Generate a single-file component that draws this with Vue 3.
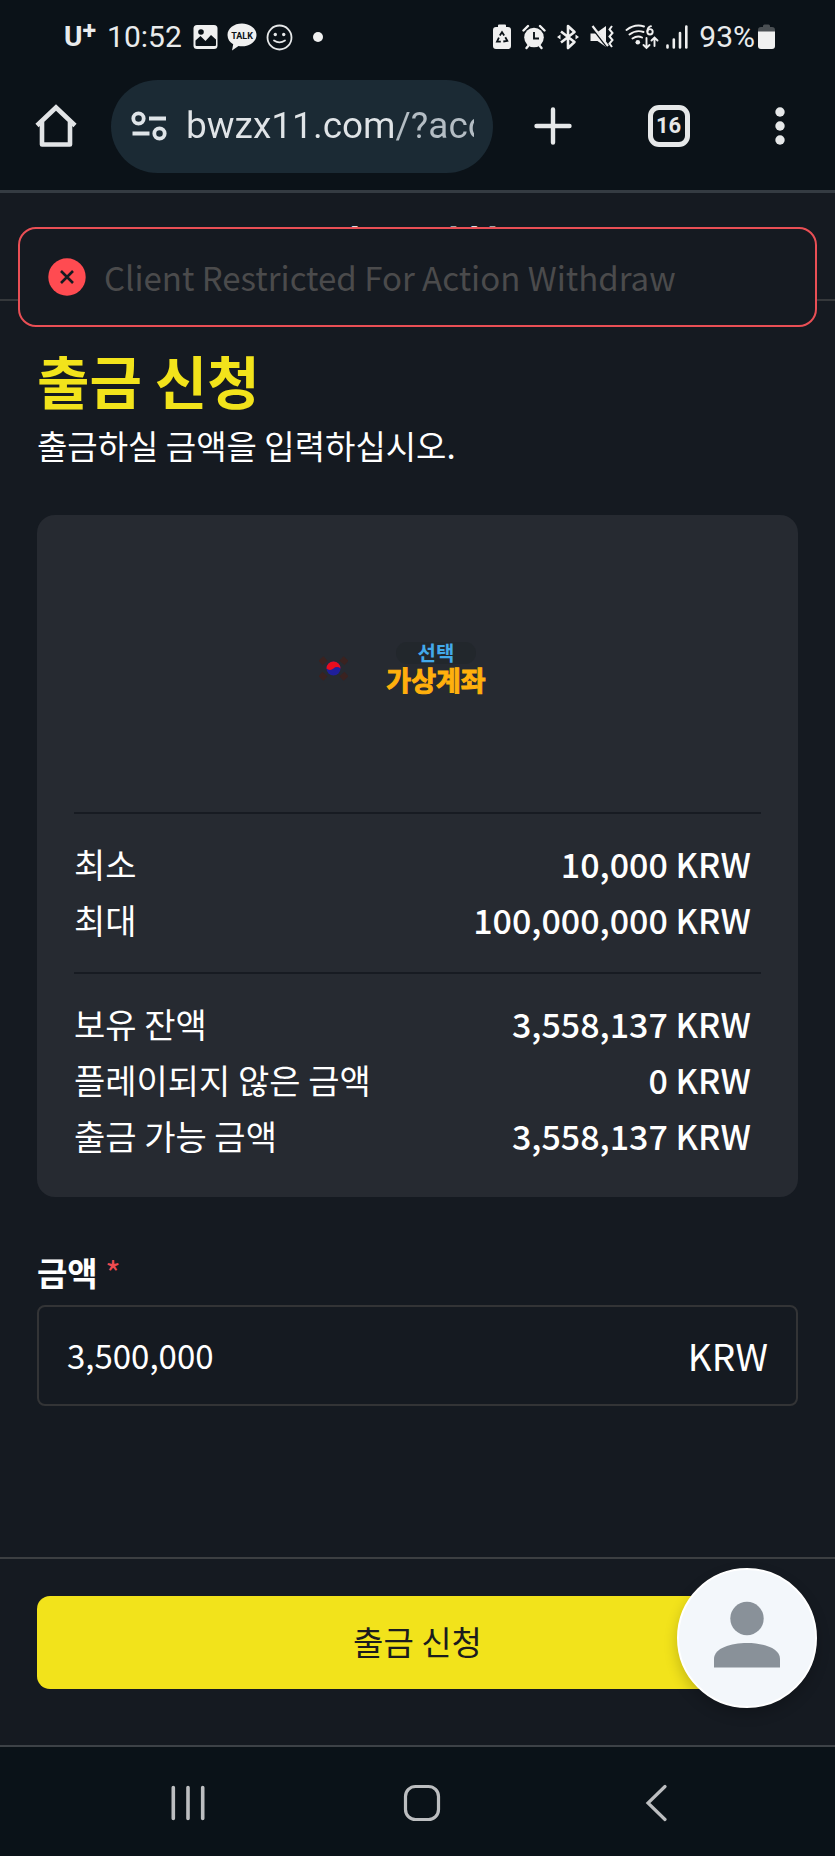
<script setup>
import { ref } from 'vue'

const address = ref('bwzx11.com/?acc')
const amount = ref('3,500,000')

const limits = [
  { label: '최소', value: '10,000 KRW' },
  { label: '최대', value: '100,000,000 KRW' },
]
const balances = [
  { label: '보유 잔액', value: '3,558,137 KRW' },
  { label: '플레이되지 않은 금액', value: '0 KRW' },
  { label: '출금 가능 금액', value: '3,558,137 KRW' },
]
</script>

<template>
  <div class="screen">
    <div class="status">
      <div class="status-group">
        <span class="carrier">U<sup>+</sup></span>
        <span class="clock">10:52</span>
        <svg class="s-image" width="25" height="26" viewBox="0 0 25 26" aria-hidden="true">
          <rect x="0.5" y="1" width="24" height="24" rx="3.5" fill="#f0f0f0" />
          <circle cx="8" cy="8" r="2.8" fill="#0b1218" />
          <path d="M2.5 20v-3.500l5-4.500 5 5 5.500-6 5 4.500V21a1 1 0 0 1-1 1H3.500a1 1 0 0 1-1-1z" fill="#0b1218" />
        </svg>
        <svg class="s-talk" width="30" height="28" viewBox="0 0 30 28" aria-hidden="true">
          <path d="M15 .5C6.900.500.500 5.400.500 12c0 4 2.200 7.400 5.700 9.300L5 27.500l6.500-4.500c1.100.200 2.300.300 3.500.300 8 0 14.500-4.900 14.500-11.300S23 .5 15 .5z" fill="#f0f0f0" />
          <text x="15" y="15.500" text-anchor="middle" class="talk-text">TALK</text>
        </svg>
        <svg class="s-smile" width="27" height="27" viewBox="0 0 27 27" fill="none" stroke="#e6e8e9" stroke-width="1.800" aria-hidden="true">
          <circle cx="13.500" cy="13.500" r="12" />
          <path d="M8 16.500q5.500 3.600 11 0" stroke-linecap="round" />
          <circle cx="9.300" cy="10.500" r="1.700" fill="#e6e8e9" stroke="none" />
          <circle cx="17.700" cy="10.500" r="1.700" fill="#e6e8e9" stroke="none" />
        </svg>
        <span class="dot"></span>
      </div>
      <div class="status-group">
        <svg width="18" height="26" viewBox="0 0 18 26" aria-hidden="true">
          <path d="M5 3V1.500Q5 .5 6 .5h6q1 0 1 1V3h2q3 0 3 3v16q0 3-3 3H3q-3 0-3-3V6q0-3 3-3z" fill="#f0f0f0" />
          <path d="M6.800 11.500 9 8.200l2.200 3.300M12.300 13.300l2 3.600-4 .6M7.800 17.600H4l1.900-4" fill="none" stroke="#0b1218" stroke-width="1.800" />
        </svg>
        <svg width="24" height="26" viewBox="0 0 24 26" aria-hidden="true">
          <circle cx="12" cy="13.500" r="9.800" fill="#f0f0f0" />
          <path d="M1.500 6.500 6 2M22.500 6.500 18 2M4.500 24l2.500-3M19.500 24 17 21" stroke="#f0f0f0" stroke-width="2.400" stroke-linecap="round" />
          <path d="M12 8v6.500h5" fill="none" stroke="#0b1218" stroke-width="1.900" />
        </svg>
        <svg width="22" height="26" viewBox="0 0 22 26" fill="none" stroke="#f0f0f0" stroke-width="2.600" stroke-linejoin="round" aria-hidden="true">
          <path d="M4 7.500l13.500 10.500-6.500 6V2l6.500 6L4 18.500" />
          <path d="M0 13l3.500-2.500v5zM22 13l-3.500-2.500v5z" fill="#f0f0f0" stroke="none" />
        </svg>
        <svg width="24" height="26" viewBox="0 0 24 26" aria-hidden="true">
          <path d="M.5 9.500h5L16 2v21L7.500 17h-7z" fill="#f0f0f0" />
          <path d="M1 1.500 18.500 24" stroke="#0b1218" stroke-width="3" />
          <path d="M2.500 2 18 22" stroke="#f0f0f0" stroke-width="2.200" />
          <path d="M22 2l-2.500 3.500 3 3.500-3 3.500 3 3.500-3 3.500 2.500 3.500" fill="none" stroke="#f0f0f0" stroke-width="2" />
        </svg>
        <svg class="s-wifi" width="34" height="26" viewBox="0 0 34 26" fill="none" stroke="#f0f0f0" stroke-width="1.900" stroke-linecap="round" aria-hidden="true">
          <path d="M1.500 6Q10 -.5 19 2.500M4.500 10.500Q11 5.500 18.500 8M7.500 14.500q5-3.500 9.500-1" />
          <circle cx="12.800" cy="18.300" r="2.300" fill="#f0f0f0" stroke="none" />
          <path d="M26 2.200q-3.500 1-3.500 5" />
          <circle cx="25" cy="7.800" r="2.700" />
          <path d="M21.500 14v9.500M18.500 21l3 3 3-3M29.500 22v-8M26.500 16.500l3-3 3 3" />
        </svg>
        <svg class="s-signal" width="22" height="26" viewBox="0 0 22 26" stroke="#f0f0f0" stroke-width="2.600" stroke-linecap="round" aria-hidden="true">
          <path d="M1.500 21.500v2M7.800 15.500v8M14 9v14.500" />
          <path d="M20.300 2.500v21" />
        </svg>
        <span class="percent">93%</span>
        <svg class="s-battery" width="17" height="26" viewBox="0 0 17 26" aria-hidden="true">
          <path d="M5 3V2q0-1.500 1.500-1.500h4Q12 .5 12 2v1h2q3 0 3 3v2H0V6q0-3 3-3z" fill="#4a4f53" />
          <path d="M0 7.500h17V22q0 3-3 3H3q-3 0-3-3z" fill="#f0f0f0" />
        </svg>
      </div>
    </div>

    <nav class="toolbar" aria-label="브라우저">
      <button class="tool" type="button" aria-label="홈">
        <svg width="42" height="44" viewBox="0 0 42 44" fill="none" stroke="#e2e4e6" stroke-width="4.600" stroke-linejoin="round" aria-hidden="true">
          <path d="M2 21.500 21 3.500l19 18" stroke-linejoin="miter" />
          <path d="M7 18v22.500h28V18" />
        </svg>
      </button>
      <div class="address">
        <svg width="36" height="30" viewBox="0 0 36 30" fill="none" stroke="#dfe4e8" stroke-width="3.800" aria-hidden="true">
          <circle cx="7.500" cy="7.500" r="5.200" />
          <path d="M18 7.500h17M1.500 22.500h17" />
          <circle cx="28.500" cy="22.500" r="5.200" />
        </svg>
        <input v-model="address" type="text" aria-label="주소" />
      </div>
      <button class="tool plus" type="button" aria-label="새 탭">
        <svg width="38" height="38" viewBox="0 0 38 38" stroke="#e6e8e9" stroke-width="4.400" stroke-linecap="round" aria-hidden="true">
          <path d="M19 2.500v33M2.500 19h33" />
        </svg>
      </button>
      <button class="tool" type="button" aria-label="탭 16개"><span class="tab-count">16</span></button>
      <button class="tool" type="button" aria-label="메뉴">
        <svg width="10" height="38" viewBox="0 0 10 38" fill="#e6e8e9" aria-hidden="true">
          <circle cx="5" cy="5" r="4.700" /><circle cx="5" cy="19" r="4.700" /><circle cx="5" cy="33" r="4.700" />
        </svg>
      </button>
    </nav>

    <header class="page-head">
      <p class="page-name">출금 신청</p>
      <div class="toast" role="alert">
        <svg width="38" height="38" viewBox="0 0 38 38" aria-hidden="true">
          <circle cx="19" cy="19" r="18.700" fill="#ff4b51" />
          <path d="M13 13l12 12M25 13 13 25" stroke="#151a20" stroke-width="2.600" />
        </svg>
        <span>Client Restricted For Action Withdraw</span>
      </div>
    </header>

    <main class="content">
      <h1>출금 신청</h1>
      <p class="lead">출금하실 금액을 입력하십시오.</p>

      <section class="card">
        <div class="method">
          <svg width="29" height="25" viewBox="0 0 29 25" aria-hidden="true">
            <g stroke="#3a2220" stroke-width="6">
              <path d="M1.500 7 6.500 2.500M22.500 2.500 27.500 7M1.500 18l5 4.500M22.500 22.500l5-4.500" />
            </g>
            <circle cx="14.500" cy="12.500" r="7" fill="#1f1f9c" />
            <path d="M7.500 12.500a7 7 0 0 1 14 0a5 5 0 0 0-7 0a5 5 0 0 1-7 0z" fill="#e80d1e" />
          </svg>
          <div class="method-name">
            <span class="pick">선택</span>
            <strong>가상계좌</strong>
          </div>
        </div>
        <dl>
          <div v-for="row in limits" :key="row.label" class="row">
            <dt>{{ row.label }}</dt>
            <dd>{{ row.value }}</dd>
          </div>
        </dl>
        <dl>
          <div v-for="row in balances" :key="row.label" class="row">
            <dt>{{ row.label }}</dt>
            <dd>{{ row.value }}</dd>
          </div>
        </dl>
      </section>

      <label class="field-label" for="amount">금액 <span>*</span></label>
      <div class="field">
        <input id="amount" v-model="amount" type="text" inputmode="numeric" />
        <span>KRW</span>
      </div>
    </main>

    <footer class="actions">
      <button class="submit" type="button">출금 신청</button>
      <button class="profile" type="button" aria-label="프로필">
        <svg width="68" height="68" viewBox="0 0 68 68" fill="#899199" aria-hidden="true">
          <circle cx="34" cy="17.500" r="16.700" />
          <path d="M1 66.500v-8.500C1 47 18 42 34 42s33 5 33 16v8.500z" />
        </svg>
      </button>
    </footer>

    <nav class="system" aria-label="시스템">
      <button type="button" aria-label="최근 앱">
        <svg width="34" height="38" viewBox="0 0 34 38" stroke="#bcbec0" stroke-width="3.600" stroke-linecap="round" aria-hidden="true">
          <path d="M2.300 3.500v31M17 3.500v31M31.700 3.500v31" />
        </svg>
      </button>
      <button type="button" aria-label="홈 화면">
        <svg width="38" height="38" viewBox="0 0 38 38" fill="none" stroke="#bcbec0" stroke-width="3.200" aria-hidden="true">
          <rect x="2.500" y="2.500" width="33" height="33" rx="10" />
        </svg>
      </button>
      <button type="button" aria-label="뒤로">
        <svg width="22" height="38" viewBox="0 0 22 38" fill="none" stroke="#bcbec0" stroke-width="3.200" stroke-linecap="round" aria-hidden="true">
          <path d="M20 2.500 3 19l17 16.500" />
        </svg>
      </button>
    </nav>
  </div>
</template>

<style>
body {
  background: #151a21;
}
</style>

<style scoped>
.screen {
  display: flex;
  flex-direction: column;
  min-height: 100vh;
  background: #151a21;
  color: #fff;
  font-family: "Noto Sans CJK KR", sans-serif;
}
* {
  box-sizing: border-box;
}
svg {
  flex: none;
  display: block;
}
button {
  display: flex;
  align-items: center;
  justify-content: center;
  padding: 0;
  border: 0;
  background: none;
  color: inherit;
  font-family: inherit;
}
input {
  min-width: 0;
  padding: 0;
  border: 0;
  outline: 0;
  background: none;
  color: inherit;
  font-family: inherit;
}

.status {
  display: flex;
  justify-content: space-between;
  height: 62px;
  padding: 12px 60px 0 64px;
  background: #0b1218;
  color: #e9ebec;
  font: 30px/50px Roboto, sans-serif;
}
.status-group {
  display: flex;
  align-items: center;
  gap: 11px;
}
.carrier {
  font-weight: 700;
  font-size: 28px;
  line-height: 50px;
}
.carrier sup {
  font-size: 25px;
  line-height: 0;
  vertical-align: 7px;
}
.talk-text {
  font: 700 9px Roboto, sans-serif;
  fill: #0b1218;
}
.s-talk {
  margin-left: -2px;
}
.s-smile {
  margin-left: -2px;
}
.dot {
  width: 10px;
  height: 10px;
  margin-left: 9px;
  border-radius: 50%;
  background: #f0f0f0;
}
.s-signal {
  margin-left: -4px;
}
.s-battery {
  margin-left: -8px;
}

.toolbar {
  display: flex;
  align-items: center;
  height: 131px;
  border-bottom: 3px solid #343b42;
  background: #0b1218;
}
.tool {
  width: 111px;
  height: 93px;
}
.plus {
  width: 120px;
}
.address {
  flex: 1;
  display: flex;
  align-items: center;
  gap: 19px;
  min-width: 0;
  height: 93px;
  padding: 0 19px 0 20px;
  border-radius: 47px;
  background: #1b2a34;
}
.address input {
  flex: 1;
  height: 60px;
  background: linear-gradient(90deg, #e0e4e7 0 209px, #b4bdc4 209px);
  background-clip: text;
  color: transparent;
  font: 37px/60px Roboto, sans-serif;
}
.tab-count {
  width: 42px;
  height: 42px;
  border: 5px solid #e6e8e9;
  border-radius: 11px;
  color: #e6e8e9;
  font: 700 22px/32px Roboto, sans-serif;
}

.page-head {
  position: relative;
  height: 108px;
  border-bottom: 2px solid #35383b;
}
.page-name {
  margin: 0;
  padding-top: 19px;
  font-size: 42px;
  font-weight: 700;
  line-height: 64px;
  text-align: center;
}
.toast {
  position: absolute;
  top: 34px;
  right: 18px;
  left: 18px;
  display: flex;
  align-items: center;
  gap: 18px;
  height: 100px;
  padding: 0 28px;
  border: 2px solid #e94f55;
  border-radius: 18px;
  background: #151a21;
  color: #4b4b4c;
  font-size: 33px;
  line-height: 48px;
}

.content {
  flex: 1;
  padding: 40px 37px;
}
h1 {
  margin: 0 0 4px;
  color: #f2e31b;
  font-size: 57px;
  font-weight: 700;
  line-height: 76px;
}
.lead {
  margin: 0 0 46px;
  font-size: 33px;
  line-height: 48px;
}
.card {
  padding: 0 37px 9px;
  border-radius: 18px;
  background: #262a31;
}
.method {
  display: flex;
  align-items: center;
  justify-content: center;
  gap: 32px;
  height: 297px;
  padding: 10px 24px 0 0;
}
.method-name {
  display: flex;
  flex-direction: column;
  align-items: center;
  width: 112px;
}
.pick {
  padding: 0 22px;
  border-radius: 11px;
  background: #22272c;
  color: #43a9ea;
  font-size: 20px;
  font-weight: 700;
  line-height: 22px;
}
.method-name strong {
  color: #ffb00c;
  font-size: 27px;
  line-height: 32px;
  -webkit-text-stroke: 1px #ffb00c;
}
dl {
  margin: 0;
  padding: 22px 0 24px;
  border-top: 2px solid #171b22;
}
.row {
  display: flex;
  justify-content: space-between;
  height: 56px;
  padding-right: 10px;
  line-height: 56px;
}
dt {
  font-size: 34px;
}
dd {
  margin: 0;
  font-size: 34px;
  font-weight: 500;
}
.field-label {
  display: block;
  margin: 51px 0 9px;
  font-size: 33px;
  font-weight: 700;
  line-height: 48px;
}
.field-label span {
  color: #f04b50;
  font-weight: 400;
}
.field {
  display: flex;
  align-items: center;
  height: 101px;
  padding: 0 28px 2px;
  border: 2px solid #333436;
  border-radius: 8px;
}
.field input {
  flex: 1;
  height: 60px;
  font-size: 33px;
}
.field span {
  font-size: 37px;
  line-height: 60px;
}

.actions {
  position: relative;
  padding: 37px 37px 56px;
  border-top: 2px solid #3c3f42;
}
.submit {
  width: 100%;
  height: 93px;
  padding-bottom: 4px;
  border-radius: 13px;
  background: #f2e31b;
  color: #1b1c1e;
  font-size: 33px;
}
.profile {
  position: absolute;
  top: 9px;
  right: 18px;
  width: 140px;
  height: 140px;
  padding-bottom: 6px;
  border: 2px solid #fff;
  border-radius: 50%;
  background: #f3f7fb;
  box-shadow: 0 6px 14px rgba(0, 0, 0, 0.2);
}

.system {
  display: grid;
  grid-template-columns: repeat(3, 1fr);
  height: 111px;
  padding: 2px 62px 0 71px;
  border-top: 2px solid #3d4247;
  background: #0a1218;
}
</style>
